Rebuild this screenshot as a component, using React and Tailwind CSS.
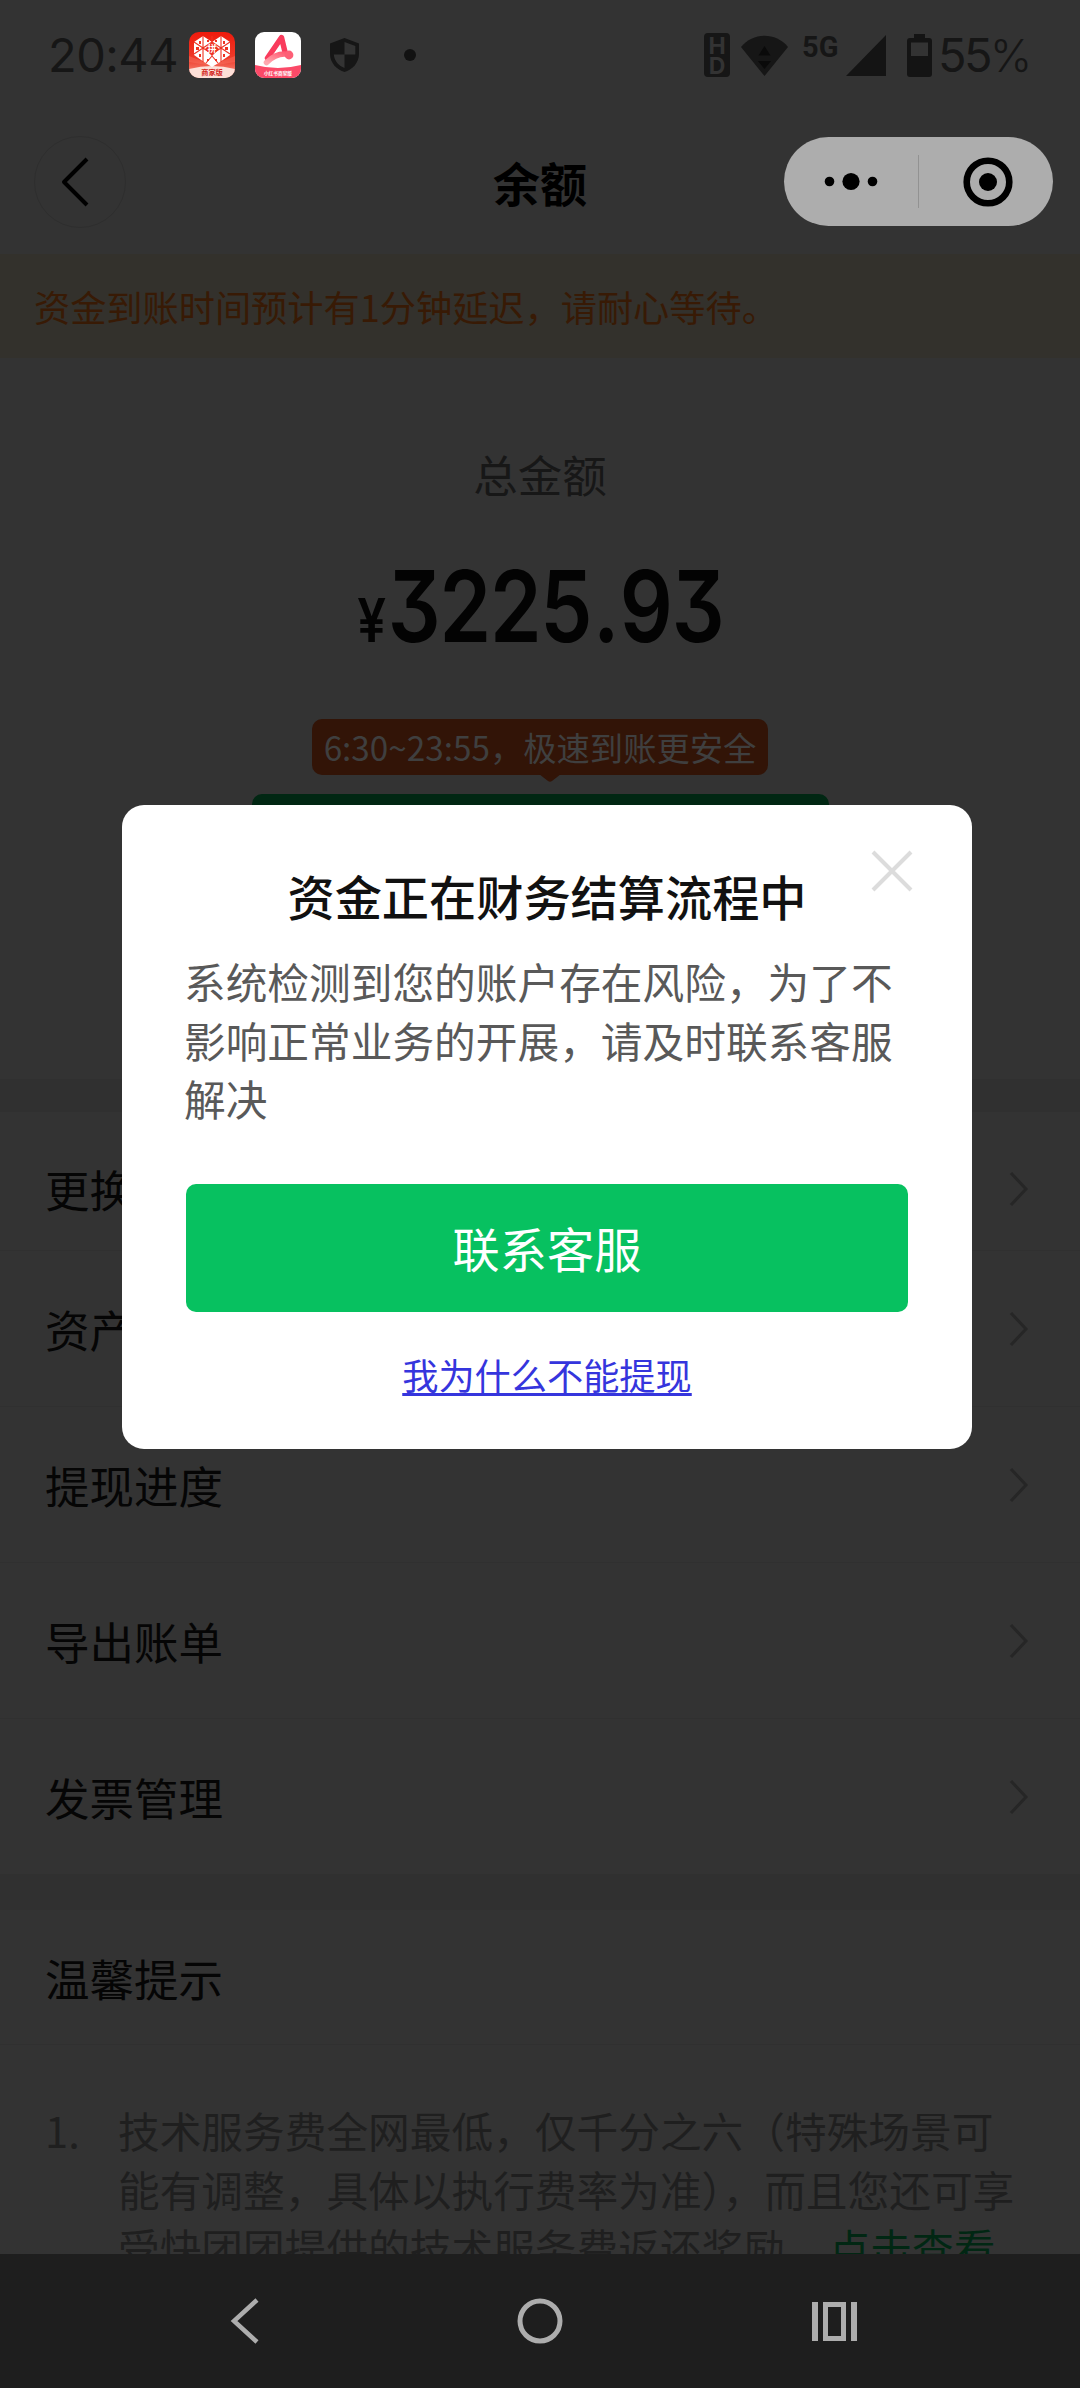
import React from 'react';

const menuRows = [
  { label: '更换提现账户', cls: 'h-[139px] pt-[15px]' },
  { label: '资产明细', cls: 'h-[156px]' },
  { label: '提现进度', cls: 'h-[156px]' },
  { label: '导出账单', cls: 'h-[156px]' },
  { label: '发票管理', cls: 'h-[156px]' },
];

function MerchantIcon() {
  return (
    <svg className="w-[46px] h-[46px]" viewBox="0 0 46 46">
      <defs>
        <clipPath id="pddClip"><rect width="46" height="46" rx="10" /></clipPath>
        <linearGradient id="pddBg" x1="0" y1="0" x2="0" y2="1">
          <stop offset="0" stopColor="#ef1a0c" />
          <stop offset="0.6" stopColor="#ee3d2c" />
          <stop offset="1" stopColor="#f79c8c" />
        </linearGradient>
      </defs>
      <g clipPath="url(#pddClip)">
        <rect width="46" height="46" fill="url(#pddBg)" />
        <path d="M23 33 L0 24 V30 L23 34 L46 30 V24 Z" fill="#f8705d" opacity="0.5" />
        <path d="M0 37 Q23 31 46 37 V46 H0 Z" fill="#fde0d8" />
        <path d="M5 10 L14 4 L23 10 L32 4 L41 10 V23 L31 30 L23 35 L15 30 L5 23 Z" fill="#fff" />
        <path
          d="M14 4 V30 M32 4 V30 M5 10 L23 22 M41 10 L23 22 M5 22 L23 10 M41 22 L23 10 M23 4 V10 M17 31 L23 24 L29 31"
          stroke="#ee3322"
          strokeWidth="1.1"
          fill="none"
        />
        <path d="M10 9h2v3h-2z M34 9h2v3h-2z M7 15h3v3h-3z M36 15h3v3h-3z M10 22h2v3h-2z M34 22h2v3h-2z M18 8h2v2h-2z M26 8h2v2h-2z M18 27h2v2h-2z M26 27h2v2h-2z" fill="#ee3322" />
        <path d="M23 10 L30 17 L23 24 L16 17 Z" fill="#ee3322" />
        <text x="23" y="20.4" fontSize="9" fontWeight="700" textAnchor="middle" fill="#fff">拼</text>
        <text x="23" y="43.4" fontSize="7.2" fontWeight="700" textAnchor="middle" fill="#d3271c">商家版</text>
      </g>
    </svg>
  );
}

function RedbookIcon() {
  return (
    <svg className="w-[46px] h-[46px]" viewBox="0 0 46 46">
      <defs>
        <clipPath id="xhsClip"><rect width="46" height="46" rx="9" /></clipPath>
        <linearGradient id="xhsTail" x1="0" y1="1" x2="1" y2="0">
          <stop offset="0" stopColor="#ffa9b0" />
          <stop offset="1" stopColor="#ff5a72" />
        </linearGradient>
      </defs>
      <g clipPath="url(#xhsClip)">
        <rect width="46" height="46" fill="#fff" />
        <path d="M0 33 Q23 39 46 33 V46 H0 Z" fill="#fb4a68" />
        <path d="M12.500 26 L26.500 5.500 L30 20" fill="none" stroke="#f93b5c" strokeWidth="5.4" strokeLinecap="round" strokeLinejoin="round" />
        <path d="M11.500 30.500 Q22 20 34 22.500" fill="none" stroke="url(#xhsTail)" strokeWidth="5.6" strokeLinecap="round" />
        <circle cx="34" cy="23" r="4.4" fill="#fd5f76" />
        <text x="23" y="43" fontSize="4.7" fontWeight="700" textAnchor="middle" fill="#fff">小红书商家版</text>
      </g>
    </svg>
  );
}

function StatusBar() {
  return (
    <div className="flex h-[110px] items-center text-[#161616] font-['Inter','Noto_Sans_CJK_SC',sans-serif]">
      <span className="ml-[48px] w-[141px] text-[47px] leading-[54px] tracking-[-0.5px]">20:44</span>
      <MerchantIcon />
      <span className="w-5" />
      <RedbookIcon />
      <svg className="ml-[29px] h-[36px] w-[29px]" viewBox="0 0 29 36">
        <path d="M14.5 1 L29 6.5 V17 C29 26 22 33 14.5 35 C7 33 0 26 0 17 V6.5 Z" fill="#161616" />
        <path d="M14.5 5 V17.5 H25.3 V9 Z M14.5 17.5 V31 C9 29 4.2 24 3.8 17.5 Z" fill="#333333" />
      </svg>
      <span className="ml-[45px] h-3 w-3 rounded-full bg-[#121212]" />
      <svg className="ml-[288px] h-[44px] w-[26px] overflow-visible" viewBox="0 0 26 44">
        <rect width="26" height="44" rx="4" fill="#161616" />
        <text x="13" y="20.500" fontSize="23" fontWeight="700" textAnchor="middle" fill="#333333">H</text>
        <text x="13" y="40.500" fontSize="23" fontWeight="700" textAnchor="middle" fill="#333333">D</text>
      </svg>
      <svg className="ml-[11px] h-[41px] w-[47px]" viewBox="0 0 47 41">
        <path d="M0 12 C12 -3 35 -3 47 12 L23.5 41 Z" fill="#161616" />
        <path d="M23.5 11 L29.500 20.5 H17.500 Z M17 26 H30 L23.5 34 Z" fill="#0a0a0a" />
      </svg>
      <span className="ml-[14px] mb-[16px] w-[44px] text-[29px] font-bold leading-[30px] font-['Roboto',sans-serif]">5G</span>
      <svg className="h-[41px] w-[40px]" viewBox="0 0 40 41">
        <path d="M40 0 V41 H0 Z" fill="#141414" />
      </svg>
      <svg className="ml-[21px] h-[43px] w-[25px]" viewBox="0 0 25 43">
        <path d="M7 0 H18 V4 H22 Q25 4 25 7 V40 Q25 43 22 43 H3 Q0 43 0 40 V7 Q0 4 3 4 H7 Z" fill="#141414" />
        <rect x="4" y="8.5" width="17" height="13.5" fill="#333333" />
      </svg>
      <span className="ml-[6px] text-[47px] leading-[54px] tracking-[-2.6px]">
        55<span className="text-[45px] font-light">%</span>
      </span>
    </div>
  );
}

function NavHeader() {
  return (
    <div className="flex h-[144px] items-start justify-between pl-[34px] pr-[27px] pt-[26px]">
      <div className="flex h-[92px] w-[92px] items-center justify-center rounded-full border border-[#2e2e2e]">
        <svg className="mr-[11px] h-[50px] w-[28px]" viewBox="0 0 28 50">
          <path d="M26 2 L3 25 L26 48" fill="none" stroke="#000" strokeWidth="4" strokeLinejoin="round" />
        </svg>
      </div>
      <div className="ml-[170px] pt-[18px] text-[47px] font-bold leading-[56px] text-black">余额</div>
      <div className="mt-px flex h-[89px] w-[269px] items-center rounded-full bg-[#adadad]">
        <svg className="h-[89px] w-[269px]" viewBox="0 0 269 89">
          <circle cx="45.5" cy="44.5" r="4.8" />
          <circle cx="67" cy="44.5" r="8.6" />
          <circle cx="88.500" cy="44.5" r="4.8" />
          <path d="M134.500 18 V71" stroke="#929292" strokeWidth="1" />
          <circle cx="204" cy="45" r="21.300" fill="none" stroke="#000" strokeWidth="6.600" />
          <circle cx="204" cy="45" r="9" />
        </svg>
      </div>
    </div>
  );
}

function Balance() {
  return (
    <div className="flex h-[721px] flex-col items-center bg-[#333333]">
      <div className="mt-[84px] text-[44.500px] leading-[64px] text-[#171717]">总金额</div>
      <div className="mt-[50px] flex h-[100px] items-baseline justify-center text-[#030303] font-['Inter',sans-serif] font-semibold">
        <div className="flex origin-center scale-x-[0.838] items-baseline">
          <span className="mr-[2px] text-[61px] leading-[100px]">¥</span>
          <span className="text-[99px] leading-[100px] tracking-[-1.5px] [font-feature-settings:'cv09']">3225<span className="mx-[2px]">.</span>93</span>
        </div>
      </div>
      <div className="relative mt-[63px] flex h-[56px] w-[456px] items-center justify-center rounded-[10px] bg-[#321407] text-[33.3px] leading-[56px] text-[#3f3f3f] whitespace-nowrap">
        6:30~23:55，极速到账更安全
        <svg className="absolute left-[227px] top-[55px] h-[8px] w-[22px]" viewBox="0 0 22 8">
          <path d="M0 0 H22 L13 7 Q11 8.500 9 7 Z" fill="#321407" />
        </svg>
      </div>
      <div className="mt-[19px] h-[128px] w-[577px] rounded-[10px] bg-[#012713]" />
    </div>
  );
}

function Dialog() {
  return (
    <div className="absolute left-[122px] top-[805px] flex h-[644px] w-[850px] flex-col items-center rounded-[22px] bg-white">
      <svg className="absolute left-[749px] top-[45px] h-[42px] w-[42px]" viewBox="0 0 42 42">
        <path d="M2 2 L40 40 M40 2 L2 40" stroke="#dcdcdc" strokeWidth="4" />
      </svg>
      <h2 className="mt-[58px] text-[47.2px] font-medium leading-[66px] text-[#111111]">资金正在财务结算流程中</h2>
      <p className="mt-[23px] w-[726px] text-[41.7px] leading-[58.500px] text-[#595959]">
        系统检测到您的账户存在风险，为了不<br />
        影响正常业务的开展，请及时联系客服<br />
        解决
      </p>
      <button className="mt-[56px] h-[128px] w-[722px] rounded-[10px] bg-[#07c160] pt-[2px] text-[47.200px] text-white">联系客服</button>
      <a className="mt-[36px] text-[36.200px] leading-[52px] text-[#3535dd] underline decoration-[3px] underline-offset-[3px]">我为什么不能提现</a>
    </div>
  );
}

function SystemNav() {
  return (
    <div className="flex h-[134px] items-center bg-[#1e1e1e]">
      <svg className="ml-[230px] h-[46px] w-[29px]" viewBox="0 0 29 46">
        <path d="M27 2 L4 23 L27 44" fill="none" stroke="#adadad" strokeWidth="4.500" />
      </svg>
      <svg className="ml-[258px] h-[46px] w-[46px]" viewBox="0 0 46 46">
        <circle cx="23" cy="23" r="20" fill="none" stroke="#adadad" strokeWidth="5" />
      </svg>
      <svg className="ml-[249px] h-[39px] w-[45px]" viewBox="0 0 45 39">
        <path d="M0 0h6v39h-6z M39 0h6v39h-6z" fill="#adadad" />
        <rect x="13.500" y="2.500" width="18" height="34" fill="none" stroke="#adadad" strokeWidth="5" />
      </svg>
    </div>
  );
}

export default function App() {
  return (
    <div className="relative flex h-[2388px] w-[1080px] flex-col overflow-hidden bg-[#333333] font-['Noto_Sans_CJK_SC',sans-serif]" lang="zh-CN">
      <div className="h-[2254px] overflow-hidden">
        <StatusBar />
        <NavHeader />
        <div className="h-[104px] bg-[#33312c] pl-[34px] text-[36.200px] leading-[104px] text-[#381a05]">
          资金到账时间预计有1分钟延迟，请耐心等待。
        </div>
        <Balance />
        <div className="h-[33px] bg-[#303030]" />

        {menuRows.map((row) => (
          <div key={row.label} className={`flex items-center justify-between border-b border-[#303030] pl-[45px] pr-[51px] ${row.cls}`}>
            <span className="pt-[1px] text-[44.500px] leading-[64px] text-[#050505]">{row.label}</span>
            <svg className="h-[36px] w-[20px]" viewBox="0 0 20 36">
              <path d="M2 2 L17 18 L2 34" fill="none" stroke="#262626" strokeWidth="3" />
            </svg>
          </div>
        ))}

        <div className="h-[35px] bg-[#303030]" />
        <div className="h-[135px] border-b border-[#303030] pl-[45px] pt-[36px] text-[44.500px] leading-[64px] text-[#050505]">温馨提示</div>

        {/* 提示列表，底部被系统导航栏截断 */}
        <div className="flex pl-[45px] pt-[56px] text-[41.700px] leading-[58.500px] text-[#1f1f1f]">
          <span className="w-[73px]">1.</span>
          <div className="whitespace-nowrap">
            <div>技术服务费全网最低，仅千分之六（特殊场景可</div>
            <div>能有调整，具体以执行费率为准），而且您还可享</div>
            <div>受快团团提供的技术服务费返还奖励。<span className="ml-[2px] text-[#012713]">点击查看</span></div>
          </div>
        </div>
      </div>
      <SystemNav />
      <Dialog />
    </div>
  );
}
